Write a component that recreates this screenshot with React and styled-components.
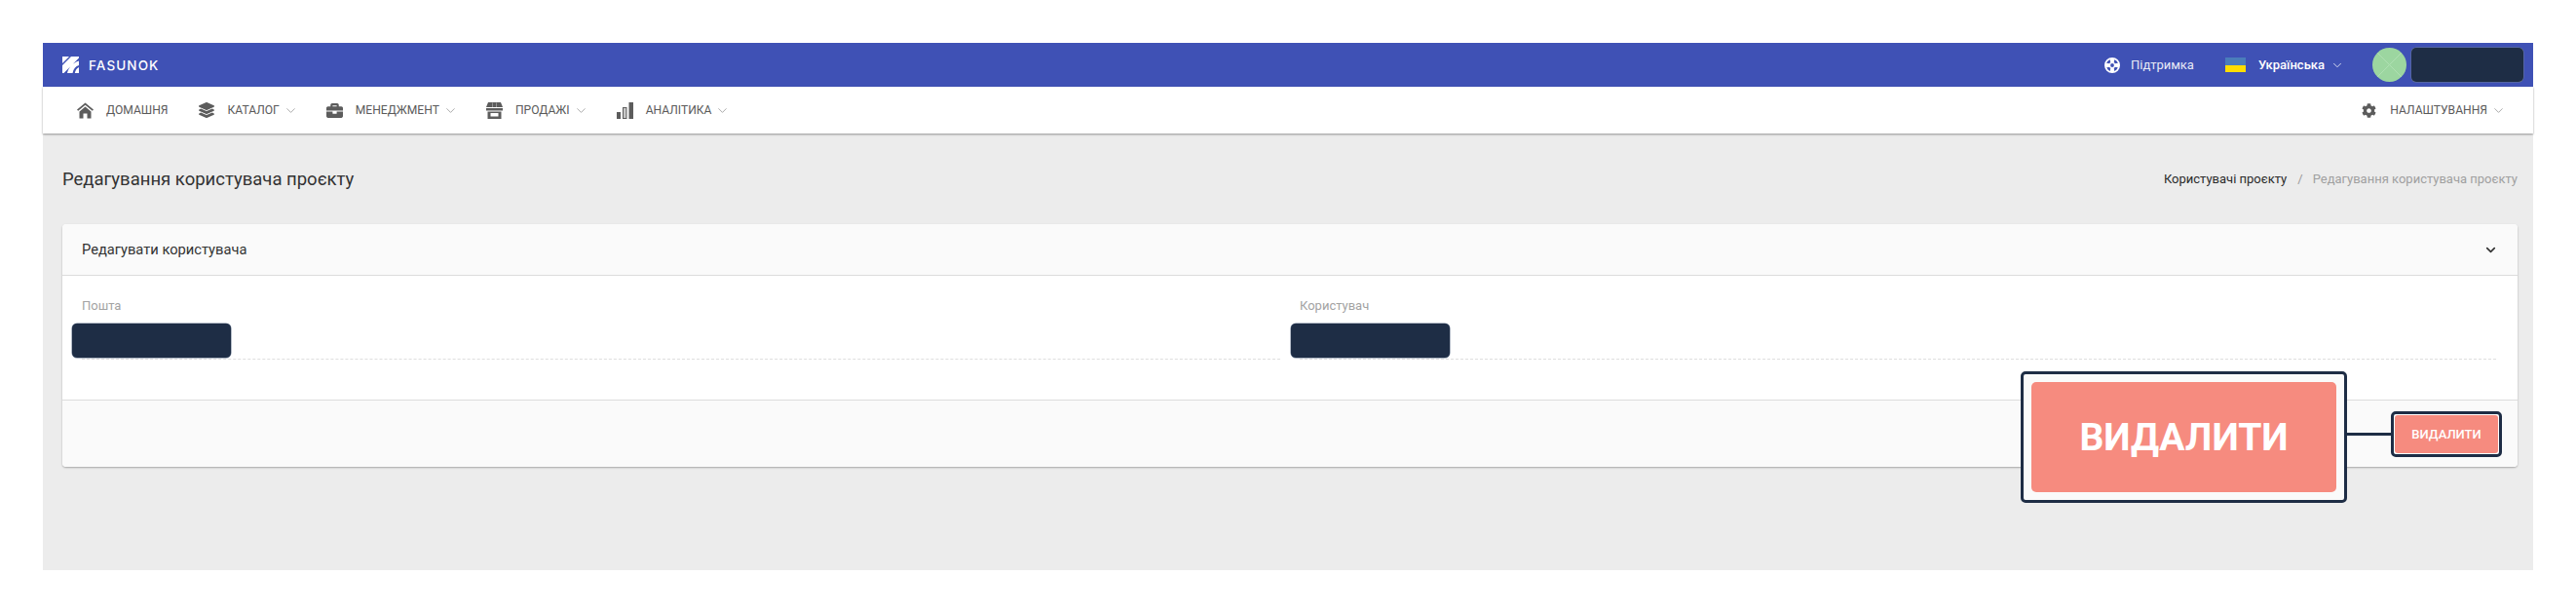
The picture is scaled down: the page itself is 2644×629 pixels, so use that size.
import React from "react";
import styled, { createGlobalStyle } from "styled-components";
import { FaLayerGroup, FaBriefcase, FaCog } from "react-icons/fa";
import { ChevronDown } from "lucide-react";

const Global = createGlobalStyle`
  html, body { margin: 0; padding: 0; background: #fff; }
  body { font-family: Roboto, "Liberation Sans", sans-serif; }
`;

const Frame = styled.div`
  width: 2556px;
  height: 541px;
  margin: 44px 0 0 44px;
  background: #ececec;
  display: flex;
  flex-direction: column;
`;
const Header = styled.header`
  height: 45px;
  background: #3f51b5;
  display: flex;
  align-items: center;
  padding: 0 10px 0 20px;
  color: #fff;
`;
const Brand = styled.div`
  display: flex;
  align-items: center;
  gap: 10px;
  font: 500 13.5px Inter, sans-serif;
  letter-spacing: 1.1px;
`;
const HeaderRight = styled.div`
  margin-left: auto;
  display: flex;
  align-items: center;
`;
const Support = styled.div`
  display: flex;
  align-items: center;
  gap: 11px;
  font: 400 13px Roboto, sans-serif;
  color: #e8eaf6;
  margin-right: 32px;
`;
const Lang = styled.div`
  display: flex;
  align-items: center;
  gap: 13px;
  font: 500 13px Roboto, sans-serif;
  margin-right: 29px;
`;
const Flag = styled.div`
  width: 21px;
  height: 15px;
  background: linear-gradient(#4a7dbb 50%, #ffdd00 50%);
`;
const LangLabel = styled.span`
  display: inline-flex;
  align-items: center;
  gap: 6px;
`;
const Avatar = styled.div`
  width: 35px;
  height: 35px;
  border-radius: 50%;
  background:
    linear-gradient(45deg, transparent 49.2%, #afe0b2 49.2%, #afe0b2 50.8%, transparent 50.8%),
    linear-gradient(-45deg, transparent 49.2%, #afe0b2 49.2%, #afe0b2 50.8%, transparent 50.8%),
    #9cd6a0;
  margin-right: 5px;
`;
const Redact = styled.div`
  width: ${(p) => p.$w}px;
  height: 35px;
  background: #1e2d45;
  border-radius: 5px;
  box-shadow: 0 0 0 0.5px #6b7a92;
`;
const Nav = styled.nav`
  height: 48px;
  background: #fff;
  display: flex;
  align-items: center;
  padding: 0 28px 0 35px;
  box-shadow: 0 1px 2px rgba(0, 0, 0, 0.38);
  position: relative;
`;
const NavItem = styled.div`
  display: flex;
  align-items: center;
  margin-right: ${(p) => p.$mr ?? 29}px;
  margin-left: ${(p) => (p.$push ? "auto" : "0")};
`;
const NavIcon = styled.span`
  width: 17px;
  height: 17px;
  display: flex;
  align-items: center;
  justify-content: center;
  margin-right: 13px;
  color: #5c5c5c;
`;
const NavText = styled.span`
  font: 400 12.1px Roboto, sans-serif;
  text-transform: uppercase;
  color: #5a5a5a;
`;
const NavChevron = styled(ChevronDown)`
  margin-left: 4px;
  color: #8f8f8f;
`;
const Content = styled.main`
  flex: 1;
  padding: 0 16px 0 20px;
`;
const TitleRow = styled.div`
  height: 93px;
  display: flex;
  align-items: center;
  justify-content: space-between;
`;
const Title = styled.h1`
  margin: 0;
  font: 400 18.5px Roboto, sans-serif;
  color: #333;
`;
const Crumbs = styled.div`
  display: flex;
  align-items: center;
  font: 400 13px Roboto, sans-serif;
`;
const CrumbLink = styled.span`
  color: #2b2b2b;
`;
const CrumbSep = styled.span`
  color: #999;
  margin: 0 10px 0 11px;
`;
const CrumbCurrent = styled.span`
  color: #a0a0a0;
`;
const Card = styled.section`
  height: 249px;
  background: #fff;
  border-radius: 4px;
  box-shadow: 0 1px 2px rgba(0, 0, 0, 0.3);
  display: flex;
  flex-direction: column;
  position: relative;
`;
const CardHead = styled.div`
  height: 53px;
  background: #fafafa;
  border-bottom: 1px solid #dcdcdc;
  border-radius: 4px 4px 0 0;
  box-sizing: border-box;
  display: flex;
  align-items: center;
  justify-content: space-between;
  padding: 0 20px 0 20px;
  font: 400 14.7px Roboto, sans-serif;
  color: #333;
`;
const CardBody = styled.div`
  flex: 1;
  display: grid;
  grid-template-columns: 1230px 1228px;
  column-gap: 20px;
  padding: 23px 22px 0 20px;
`;
const Field = styled.div`
  position: relative;
  height: 63px;
  border-bottom: 1px dashed #dedede;
  box-sizing: border-box;
`;
const FieldLabel = styled.label`
  display: block;
  font: 400 13px Roboto, sans-serif;
  color: #a3a3a3;
`;
const FieldRedact = styled.div`
  position: absolute;
  left: ${(p) => p.$left}px;
  top: 26px;
`;
const CardFoot = styled.div`
  height: 69px;
  background: #fafafa;
  border-top: 1px solid #dcdcdc;
  border-radius: 0 0 4px 4px;
  box-sizing: border-box;
  display: flex;
  align-items: center;
  justify-content: flex-end;
  padding-right: 16px;
`;
const HighlightBox = styled.div`
  border: 3px solid #1e2d45;
  border-radius: 5px;
  padding: 1px;
  background: #fff;
  display: flex;
`;
const DeleteButton = styled.button`
  width: 106px;
  height: 39px;
  border: 0;
  border-radius: 3px;
  padding: 0;
  background: #f68b7f;
  color: #fff;
  font: 500 13px Roboto, sans-serif;
`;
const Callout = styled.div`
  position: absolute;
  left: 2010px;
  top: 151px;
  width: 335px;
  height: 135px;
  box-sizing: border-box;
  border: 3px solid #1e2d45;
  border-radius: 5px;
  background: #fafafa;
  padding: 8px 8px;
  display: flex;
`;
const CalloutButton = styled.div`
  flex: 1;
  border-radius: 5px;
  background: #f68b7f;
  color: #fff;
  font: 700 39px Roboto, sans-serif;
  display: flex;
  align-items: center;
  justify-content: center;
`;
const Connector = styled.div`
  position: absolute;
  left: 2344px;
  top: 214px;
  width: 48px;
  height: 3px;
  background: #1e2d45;
`;

const Logo = () => (
  <svg width="17" height="17" viewBox="0 0 17 17" fill="#fff">
    <path d="M0 0h7L0 7zM9 0h8v1.5L1.5 17H0V9zM17 4.5V9c-3.5 1-5.5 3.5-6.5 8H5c1.5-6 5.500-10.500 12-12.500zM17 11v6h-4.200c.6-3 2-5 4.200-6z" />
  </svg>
);
const Home = () => (
  <svg width="17" height="17" viewBox="0 0 17 17" fill="currentColor">
    <path d="M8.500 0.500 0 7.500l1.200 1.300L8.500 2.800l7.300 6L17 7.500z" />
    <path d="M8.500 4.500 2.500 9.600V16.500h4v-5h4v5h4V9.600z" />
  </svg>
);
const Bars = () => (
  <svg width="17" height="17" viewBox="0 0 17 17">
    <rect x="0" y="10" width="4" height="7" fill="#5c5c5c" />
    <rect x="6.500" y="5.500" width="3.500" height="11" fill="#c9c9c9" stroke="#5c5c5c" strokeWidth="1" />
    <rect x="12.500" y="0" width="4.500" height="17" fill="#5c5c5c" />
  </svg>
);
const Store = () => (
  <svg width="17" height="17" viewBox="0 0 17 17" fill="currentColor">
    <path d="M2 0h13l2 5H0z" />
    <path d="M0 6h17v2.500H0z" />
    <path d="M6 0.500h1v4.500H6zM10 0.500h1v4.500h-1z" fill="#fff" opacity="0.35" />
    <path fillRule="evenodd" d="M1.500 9.500h14V17h-14zM4.500 11v3.500h8V11z" />
  </svg>
);
const SupportIcon = () => (
  <svg width="16" height="16" viewBox="0 0 16 16" fill="#fff">
    <path fillRule="evenodd" d="M8 0a8 8 0 1 0 0 16A8 8 0 0 0 8 0zm0 1.700a6.300 6.300 0 1 1 0 12.600A6.300 6.300 0 0 1 8 1.700z" />
    <path fillRule="evenodd" d="M8 4.800a3.200 3.200 0 1 0 0 6.400 3.200 3.200 0 0 0 0-6.400zm0 1.300a1.900 1.900 0 1 1 0 3.800 1.900 1.900 0 0 1 0-3.800z" />
    <path d="M5.500 1h5l-.8 4.200H6.300zM5.500 15h5l-.8-4.200H6.300zM1 5.500v5l4.200-.8V6.300zM15 5.500v5l-4.200-.8V6.300z" />
  </svg>
);

const items = [
  { label: "Домашня", icon: <Home />, mr: 31 },
  { label: "Каталог", icon: <FaLayerGroup size={16} />, chevron: true },
  { label: "Менеджмент", icon: <FaBriefcase size={17} />, chevron: true },
  { label: "Продажі", icon: <Store />, chevron: true },
  { label: "Аналітика", icon: <Bars />, chevron: true },
];

export default function App() {
  return (
    <>
      <Global />
      <Frame>
        <Header>
          <Brand>
            <Logo />
            FASUNOK
          </Brand>
          <HeaderRight>
            <Support>
              <SupportIcon />
              Підтримка
            </Support>
            <Lang>
              <Flag />
              <LangLabel>
                Українська
                <ChevronDown size={14} strokeWidth={1.3} />
              </LangLabel>
            </Lang>
            <Avatar />
            <Redact $w={115} />
          </HeaderRight>
        </Header>
        <Nav>
          {items.map((it) => (
            <NavItem key={it.label} $mr={it.mr}>
              <NavIcon>{it.icon}</NavIcon>
              <NavText>{it.label}</NavText>
              {it.chevron && <NavChevron size={15} strokeWidth={1.2} />}
            </NavItem>
          ))}
          <NavItem $push $mr={0}>
            <NavIcon>
              <FaCog size={15} />
            </NavIcon>
            <NavText>Налаштування</NavText>
            <NavChevron size={15} strokeWidth={1.2} />
          </NavItem>
        </Nav>
        <Content>
          <TitleRow>
            <Title>Редагування користувача проєкту</Title>
            <Crumbs>
              <CrumbLink>Користувачі проєкту</CrumbLink>
              <CrumbSep>/</CrumbSep>
              <CrumbCurrent>Редагування користувача проєкту</CrumbCurrent>
            </Crumbs>
          </TitleRow>
          <Card>
            <CardHead>
              Редагувати користувача
              <ChevronDown size={15} strokeWidth={2.6} color="#333" />
            </CardHead>
            <CardBody>
              <Field>
                <FieldLabel>Пошта</FieldLabel>
                <FieldRedact $left={-10}>
                  <Redact $w={163} />
                </FieldRedact>
              </Field>
              <Field>
                <FieldLabel>Користувач</FieldLabel>
                <FieldRedact $left={-9}>
                  <Redact $w={163} />
                </FieldRedact>
              </Field>
            </CardBody>
            <CardFoot>
              <HighlightBox>
                <DeleteButton>ВИДАЛИТИ</DeleteButton>
              </HighlightBox>
            </CardFoot>
            <Callout>
              <CalloutButton>ВИДАЛИТИ</CalloutButton>
            </Callout>
            <Connector />
          </Card>
        </Content>
      </Frame>
    </>
  );
}
